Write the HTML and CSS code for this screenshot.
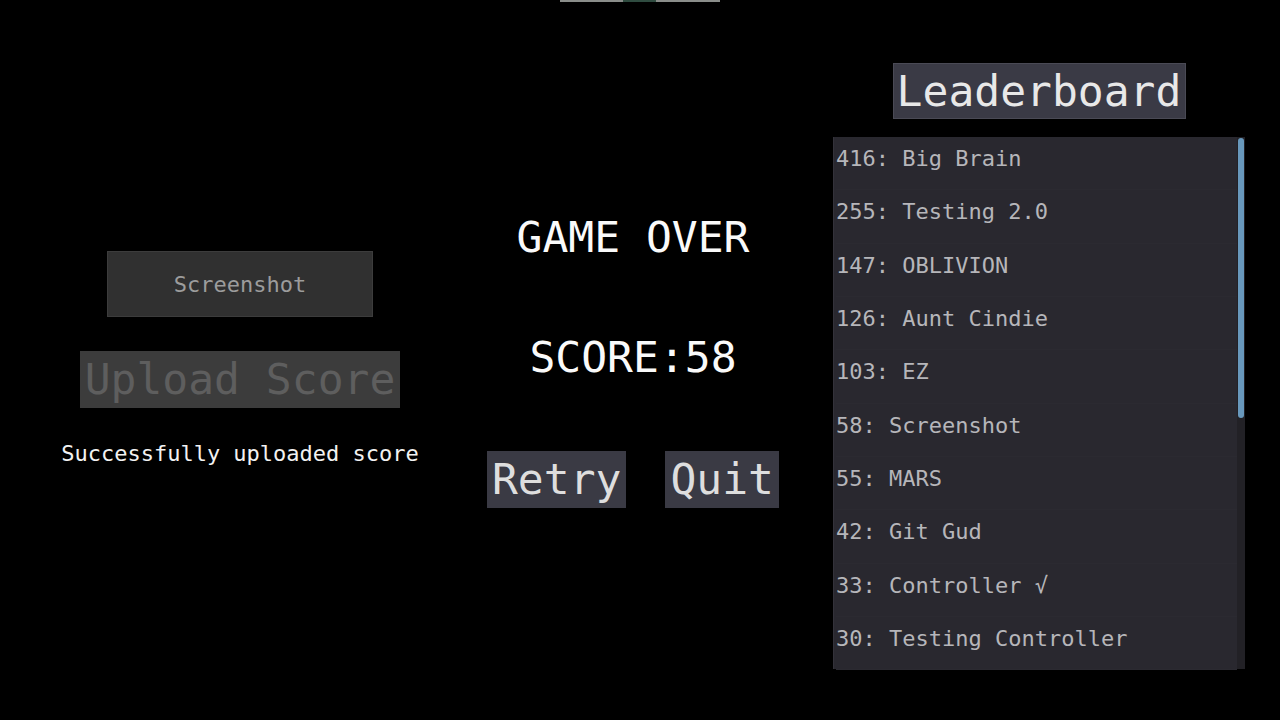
FILE: index.html
```html
<!DOCTYPE html>
<html lang="en">
<head>
<meta charset="utf-8">
<title>Game Over</title>
<link rel="stylesheet" href="styles.css">
</head>
<body>
  <div class="topbar">
    <div class="seg seg-gray" style="width:63px"></div>
    <div class="seg seg-green" style="width:33px"></div>
    <div class="seg seg-gray" style="width:64px"></div>
  </div>
  <main class="screen">
    <section class="col col-left">
      <button class="btn-shot">Screenshot</button>
      <button class="btn-upload" disabled>Upload Score</button>
      <p class="status">Successfully uploaded score</p>
    </section>

    <section class="col col-mid">
      <h1 class="title">GAME OVER</h1>
      <p class="score">SCORE:58</p>
      <div class="actions">
        <button class="btn-big">Retry</button>
        <button class="btn-big">Quit</button>
      </div>
    </section>

    <section class="col col-right">
      <div class="board-title">Leaderboard</div>
      <div class="board">
        <ul class="rows">
          <li>416: Big Brain</li>
          <li>255: Testing 2.0</li>
          <li>147: OBLIVION</li>
          <li>126: Aunt Cindie</li>
          <li>103: EZ</li>
          <li>58: Screenshot</li>
          <li>55: MARS</li>
          <li>42: Git Gud</li>
          <li>33: Controller √</li>
          <li>30: Testing Controller</li>
        </ul>
        <div class="scroll">
          <div class="thumb"></div>
        </div>
      </div>
    </section>
  </main>
</body>
</html>
```

FILE: styles.css
```css
* {
  box-sizing: border-box;
}

html, body {
  margin: 0;
  padding: 0;
  background: #000;
  width: 1280px;
  height: 720px;
  overflow: hidden;
}

body {
  font-family: "DejaVu Sans Mono", "Liberation Mono", monospace;
  color: #f0f0f0;
}

/* thin loading strip at the very top */
.topbar {
  display: flex;
  justify-content: center;
  height: 2px;
}

.seg {
  height: 2px;
}

.seg-gray {
  background: #8a8d8a;
}

.seg-green {
  background: #2f4c40;
}

.screen {
  display: grid;
  grid-template-columns: 480px 306px 47px 412px;
  height: 718px;
}

.col {
  display: flex;
  flex-direction: column;
  align-items: center;
}

button {
  font-family: inherit;
  border: none;
  padding: 0;
  margin: 0;
  cursor: pointer;
}

/* left column */
.col-left {
  grid-column: 1;
  padding-top: 249px;
}

.btn-shot {
  width: 266px;
  height: 66px;
  background: #303030;
  border: 1px solid #3c3c3c;
  color: #9c9c9c;
  font-size: 22px;
}

.btn-upload {
  margin-top: 34px;
  width: 320px;
  height: 57px;
  background: #3c3c3c;
  color: #5e5e5e;
  font-size: 43px;
  line-height: 57px;
}

.status {
  margin: 33px 0 0;
  font-size: 22px;
  line-height: 26px;
  color: #f2f2f2;
}

/* middle column */
.col-mid {
  grid-column: 2;
  padding-top: 210px;
}

.title,
.score {
  margin: 0;
  font-weight: normal;
  font-size: 43px;
  line-height: 50px;
  color: #fafafa;
}

.score {
  margin-top: 70px;
}

.actions {
  display: flex;
  gap: 39px;
  margin-top: 69px;
}

.btn-big {
  height: 57px;
  padding: 0 5px;
  background: #3a3a44;
  color: #dedede;
  font-size: 43px;
  line-height: 57px;
}

/* right column */
.col-right {
  grid-column: 4;
  padding-top: 61px;
}

.board-title {
  width: 293px;
  height: 56px;
  background: #3a3a45;
  border: 1px solid #4a4a55;
  color: #e8e8e8;
  font-size: 43px;
  line-height: 54px;
  text-align: center;
}

.board {
  margin-top: 18px;
  width: 412px;
  height: 532px;
  display: flex;
  background: #29282f;
  border-left: 1px solid #33323a;
}

.rows {
  list-style: none;
  margin: 0;
  padding: 0 0 0 2px;
  flex: 1;
}

.rows li {
  height: 53.33px;
  line-height: 43px;
  font-size: 22px;
  color: #b6b6ba;
  white-space: nowrap;
  border-bottom: 1px solid #2b2a31;
}

.scroll {
  width: 8px;
  background: #222126;
  padding: 1px 0 0 1px;
}

.thumb {
  width: 6px;
  height: 280px;
  border-radius: 3px;
  background: #6898bc;
}
```
